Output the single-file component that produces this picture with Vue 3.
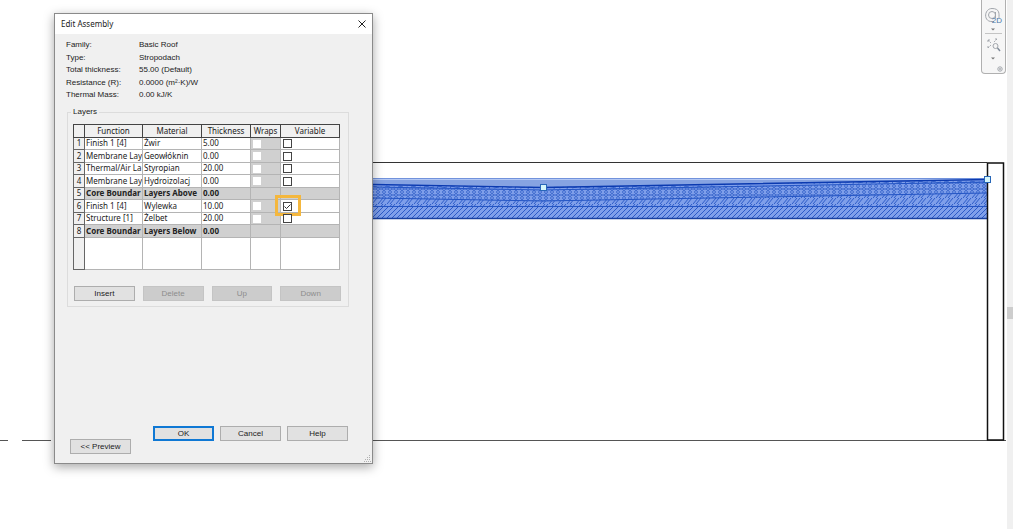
<script setup>
import { ref } from 'vue'

const info = [
  ['Family:', 'Basic Roof'],
  ['Type:', 'Stropodach'],
  ['Total thickness:', '55.00 (Default)'],
  ['Resistance (R):', '0.0000 (m²·K)/W'],
  ['Thermal Mass:', '0.00 kJ/K'],
]

const layers = ref([
  { fn: 'Finish 1 [4]', material: 'Żwir', thickness: '5.00', variable: false },
  { fn: 'Membrane Lay', material: 'Geowłóknin', thickness: '0.00', variable: false },
  { fn: 'Thermal/Air La', material: 'Styropian', thickness: '20.00', variable: false },
  { fn: 'Membrane Lay', material: 'Hydroizolacj', thickness: '0.00', variable: false },
  { fn: 'Core Boundar', material: 'Layers Above', thickness: '0.00', core: true },
  { fn: 'Finish 1 [4]', material: 'Wylewka', thickness: '10.00', variable: true, marked: true },
  { fn: 'Structure [1]', material: 'Żelbet', thickness: '20.00', variable: false },
  { fn: 'Core Boundar', material: 'Layers Below', thickness: '0.00', core: true },
])
</script>

<template>
  <main class="workspace">
    <svg class="drawing" aria-hidden="true">
      <defs>
        <pattern id="hex" width="6" height="6" patternUnits="userSpaceOnUse">
          <path d="M1.500 0L.5 1.500L1.500 3H4.500L5.500 1.500L4.500 0M1.500 3L.5 4.500L1.500 6M4.500 3L5.500 4.500L4.500 6" fill="none" stroke="#1f50c0" stroke-width=".8" />
        </pattern>
        <pattern id="hatch" width="5" height="5" patternUnits="userSpaceOnUse">
          <path d="M-1 1L1 -1M0 5L5 0M4 6L6 4" stroke="#2353c4" stroke-width=".9" />
        </pattern>
        <pattern id="screed" width="9" height="6" patternUnits="userSpaceOnUse">
          <path d="M0 6L5 0M3 6L8 0" stroke="#2353c4" stroke-width=".9" />
        </pattern>
        <pattern id="gravel" width="13" height="5" patternUnits="userSpaceOnUse">
          <path d="M0 3L5 2M8 4L9 1L13 2" fill="none" stroke="#2353c2" stroke-width=".8" />
        </pattern>
      </defs>
      <path d="M373 162.500H987" stroke="#333" />
      <path d="M0 440.500H8M22 440.500H51M373 440.500H1006" stroke="#555" />
      <rect x="373" y="178" width="614" height="41" fill="#7f9fea" />
      <path d="M373 178.500H987" stroke="#7192dc" />
      <path d="M373 179.500H987" stroke="#b4c8f4" />
      <path d="M373 180H970L543 187L373 184Z" fill="#86a3e2" />
      <path d="M373 184L543 187L987 180V183L543 190L373 187Z" fill="url(#gravel)" />
      <path d="M373 187L543 190L987 182V193L543 201L373 198Z" fill="url(#hex)" />
      <path d="M373 198L543 201L987 193V206H373Z" fill="url(#screed)" />
      <rect x="373" y="207" width="614" height="11" fill="url(#hatch)" />
      <path d="M373 187L543 190L987 182M373 198L543 201L987 193M373 206.500H987" fill="none" stroke="#2455c4" />
      <path d="M373 184.500L543 187.500L987 179.500" fill="none" stroke="#0b3ab0" stroke-width="1.400" />
      <path d="M373 218.500H987" stroke="#173f9f" stroke-width="1.500" />
      <rect x="987.500" y="163" width="16" height="277" fill="#fff" stroke="#111" stroke-width="1.500" />
      <g fill="#d5f5fa" stroke="#2867b8">
        <rect x="540.500" y="184.500" width="6" height="6" />
        <rect x="984.500" y="176.500" width="6" height="6" />
      </g>
    </svg>

    <div class="scrollbar"><div class="thumb"></div></div>

    <nav class="navbar" aria-label="Navigation">
      <svg width="23" height="73" viewBox="0 0 23 73" fill="none" stroke="#a2a6ac">
        <path d="M10 21.500C1 22 2 8.500 10 8.500C18 8.500 17 14 17 18" />
        <path d="M10 21.500H12" />
        <circle cx="10" cy="15" r="3.500" />
        <path d="M13.500 12V18" />
        <path d="M3 33.500H20" stroke="#c4c4c4" />
        <path d="M6 40L9 43M15 39L12 42M6 48L9 45M6 40H8M6 40V42M15 39H13M6 48V46" stroke-dasharray="2 1" />
        <circle cx="13.500" cy="46" r="2.500" />
        <path d="M15.500 48L18 51" stroke="#7f8a98" stroke-width="1.400" />
        <path d="M9 28.500H13L11 30.500ZM9 57.500H13L11 59.500Z" fill="#777" stroke="none" />
        <circle cx="18" cy="69" r="2.200" />
        <circle cx="18" cy="69" r=".6" />
      </svg>
      <span class="two-d">2D</span>
    </nav>

    <section class="dialog" role="dialog" aria-labelledby="dialog-title">
      <header class="titlebar">
        <h1 id="dialog-title">Edit Assembly</h1>
        <button class="close" type="button" aria-label="Close">
          <svg width="8" height="8" viewBox="0 0 8 8"><path d="M.5.5L7.500 7.500M7.500.5L.5 7.500" stroke="#222" /></svg>
        </button>
      </header>

      <dl class="info">
        <template v-for="[label, value] in info" :key="label">
          <dt>{{ label }}</dt>
          <dd>{{ value }}</dd>
        </template>
      </dl>

      <fieldset class="layers">
        <legend>Layers</legend>
        <table>
          <colgroup>
            <col class="c-num"><col class="c-fn"><col class="c-mat"><col class="c-thick"><col class="c-wrap"><col>
          </colgroup>
          <thead>
            <tr><th></th><th>Function</th><th>Material</th><th>Thickness</th><th>Wraps</th><th>Variable</th></tr>
          </thead>
          <tbody>
            <tr v-for="(layer, i) in layers" :key="i" :class="{ core: layer.core }">
              <th scope="row">{{ i + 1 }}</th>
              <td class="text">{{ layer.fn }}</td>
              <td class="text">{{ layer.material }}</td>
              <td class="text">{{ layer.thickness }}</td>
              <td class="wraps"><input v-if="!layer.core" type="checkbox" disabled :aria-label="`Wraps ${i + 1}`"></td>
              <td class="variable">
                <div v-if="!layer.core" class="check">
                  <input v-model="layer.variable" type="checkbox" :aria-label="`Variable ${i + 1}`">
                  <svg v-if="layer.variable" class="tick" width="9" height="9" viewBox="0 0 9 9"><path d="M1.500 4.500L3.500 6.500L7.500 2.500" fill="none" stroke="#333" /></svg>
                  <span v-if="layer.marked" class="marker"></span>
                </div>
              </td>
            </tr>
            <tr class="filler"><th></th><td></td><td></td><td></td><td></td><td></td></tr>
          </tbody>
        </table>
        <div class="actions">
          <button type="button">Insert</button>
          <button type="button" disabled>Delete</button>
          <button type="button" disabled>Up</button>
          <button type="button" disabled>Down</button>
        </div>
      </fieldset>

      <footer class="footer">
        <button class="preview" type="button">&lt;&lt; Preview</button>
        <div class="confirm">
          <button class="primary" type="button">OK</button>
          <button type="button">Cancel</button>
          <button type="button">Help</button>
        </div>
      </footer>
      <svg class="grip" width="7" height="7" viewBox="0 0 7 7" fill="#b0b0b0" aria-hidden="true">
        <path d="M5 0h1v1h-1zM3 2h1v1h-1zM5 2h1v1h-1zM1 4h1v1h-1zM3 4h1v1h-1zM5 4h1v1h-1zM0 6h1v1h-1zM2 6h1v1h-1zM4 6h1v1h-1zM6 6h1v1h-1z" />
      </svg>
    </section>
  </main>
</template>

<style>
body {
  margin: 0;
  background: #fff;
}
</style>

<style scoped>
* {
  box-sizing: border-box;
}
.workspace {
  position: relative;
  min-height: 100vh;
  overflow: hidden;
  font: 8px/12px "Liberation Sans", Arial, sans-serif;
  color: #222;
}
.drawing {
  position: absolute;
  inset: 0;
  width: 100%;
  height: 100%;
}
.scrollbar {
  position: absolute;
  top: 0;
  right: 0;
  bottom: 0;
  width: 6px;
  padding-top: 307px;
  background: #f0f0f0;
}
.thumb {
  height: 12px;
  background: #cdcdcd;
}
.navbar {
  position: absolute;
  top: 0;
  right: 7px;
  width: 25px;
  height: 74px;
  border: 1px solid #b0b0b0;
  border-top: 0;
  border-radius: 0 0 4px 4px;
  background: #f6f6f6;
}
.navbar svg {
  display: block;
}
.two-d {
  position: absolute;
  top: 16px;
  right: 3px;
  line-height: 9px;
  color: #4a78a8;
}
.dialog {
  position: absolute;
  left: 54px;
  top: 13px;
  width: 319px;
  border: 1px solid #8a8a8a;
  background: #f0f0f0;
  box-shadow: 0 3px 10px rgba(0, 0, 0, .35);
}
.titlebar {
  display: flex;
  align-items: center;
  justify-content: space-between;
  height: 20px;
  padding: 0 6px 0 6px;
  background: #fff;
}
h1 {
  margin: 0;
  font: 400 8px/12px "Noto Sans", sans-serif;
}
button {
  height: 15px;
  padding: 0;
  border: 1px solid #adadad;
  background: #e1e1e1;
  color: #222;
  font: inherit;
  line-height: 12px;
}
button:disabled {
  border-color: #c4c4c4;
  background: #ccc;
  color: #8c8c8c;
}
.titlebar .close {
  display: flex;
  align-items: center;
  border: 0;
  background: none;
}
.info {
  display: grid;
  grid-template-columns: 73px 1fr;
  grid-template-rows: repeat(5, 1fr);
  height: 63px;
  margin: 5px 11px 0;
}
.info dd {
  margin: 0;
}
.layers {
  min-width: 0;
  margin: 4px 23px 0 12px;
  padding: 6px 7px 5px 6px;
  border: 1px solid #dcdcdc;
}
legend {
  margin-left: -3px;
  padding: 0 2px;
}
table {
  width: 267px;
  margin-left: -1px;
  border-collapse: collapse;
  table-layout: fixed;
  background: #fff;
  font-family: "Noto Sans", "Open Sans", sans-serif;
}
.c-num { width: 11px; }
.c-fn { width: 58px; }
.c-mat { width: 59px; }
.c-thick { width: 49px; }
.c-wrap { width: 30px; }
th,
td {
  height: 12px;
  padding: 0 0 0 1px;
  border: 1px solid #b4b4b4;
  overflow: hidden;
  white-space: nowrap;
  text-align: left;
  font-weight: 400;
  line-height: 10px;
}
td.text {
  padding-bottom: 1px;
}
tbody tr:nth-child(even) > * {
  height: 13px;
}
thead th {
  height: 13px;
  padding: 0;
  border-color: #444;
  background: #f0f0f0;
  text-align: center;
}
tbody th {
  padding: 0 0 1px;
  border-color: #666;
  background: #f0f0f0;
  text-align: center;
}
td.wraps {
  background: #d0d0d0;
}
.core td {
  background: #d0d0d0;
  font-weight: 700;
}
tbody tr.filler > * {
  height: 32px;
}
input {
  display: block;
  width: 9px;
  height: 9px;
  margin: 0;
  border: 1px solid #444;
  background: #fff;
  appearance: none;
}
.wraps input {
  margin-left: 1px;
  width: 8px;
  height: 8px;
  border: 0;
}
td.variable {
  overflow: visible;
}
.check {
  position: relative;
  width: 9px;
  margin-left: 1px;
}
.tick {
  position: absolute;
  left: 0;
  top: 0;
}
.marker {
  position: absolute;
  left: -8px;
  top: -7px;
  width: 26px;
  height: 21px;
  border: 3px solid #f4b73e;
  pointer-events: none;
}
.actions {
  display: grid;
  grid-template-columns: repeat(4, 1fr);
  gap: 8px;
  margin-top: 16px;
}
.footer {
  display: flex;
  align-items: flex-end;
  justify-content: space-between;
  height: 28px;
  margin: 119px 24px 9px 15px;
}
.footer button {
  width: 61px;
}
.confirm {
  display: flex;
  align-self: flex-start;
  gap: 6px;
}
.footer .primary {
  border: 2px solid #0f78d4;
  line-height: 10px;
}
.grip {
  position: absolute;
  right: 1px;
  bottom: 1px;
}
</style>
